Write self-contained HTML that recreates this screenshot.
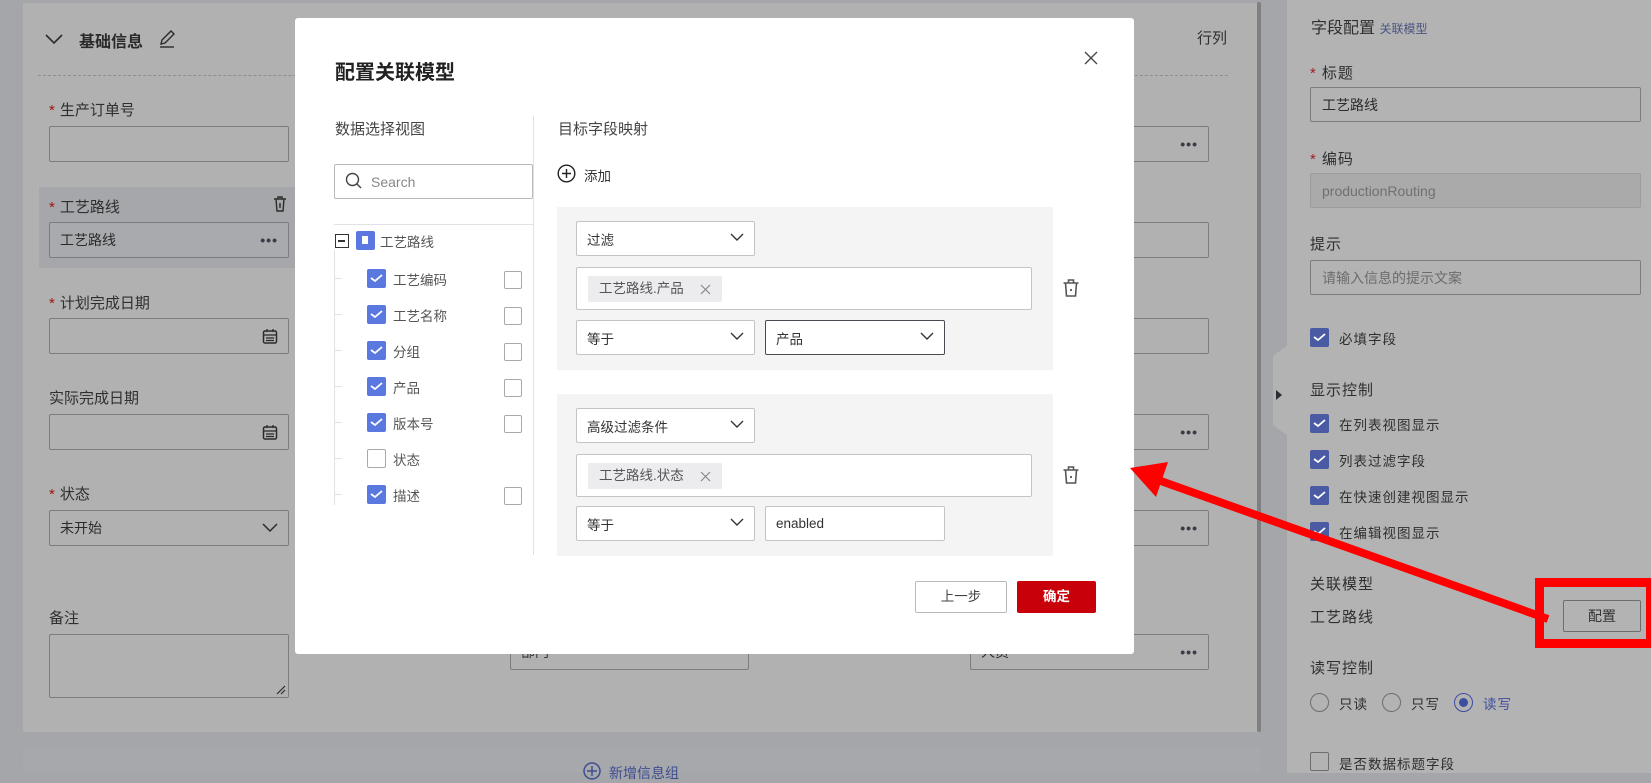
<!DOCTYPE html>
<html><head><meta charset="utf-8"><style>
*{box-sizing:border-box;margin:0;padding:0}
body{width:1651px;height:773px;position:relative;overflow:hidden;background:#a5a6aa;font-family:"Liberation Sans","Noto Sans CJK SC",sans-serif;color:#2b2b2b}
.a{position:absolute}
.card{left:23px;top:3px;width:1237px;height:729px;background:#b1b1b1}
.lbl{position:absolute;font-size:15px;color:#2f2f2f}
.req{color:#a01515;margin-right:5px}
.in{position:absolute;border:1px solid #7d7d80;border-radius:2px;background:#b1b1b1;font-size:14px;padding-left:10px;display:flex;align-items:center;color:#2b2b2b}
.dots{position:absolute;right:10px;top:50%;transform:translateY(-50%);font-size:14px;letter-spacing:1px;font-weight:bold;color:#3a3d48}
.rp{left:1287px;top:0;width:364px;height:773px;background:#b3b3b3}
.rin{position:absolute;left:1310px;width:331px;height:35px;border:1px solid #7d7d80;border-radius:2px;font-size:14px;padding-left:11px;display:flex;align-items:center}
.cb{position:absolute;width:19px;height:19px;background:#4a5ba3;border-radius:2px}
.cb svg{position:absolute;left:3px;top:4px}
.rl{position:absolute;font-size:13.5px;color:#2f2f2f;letter-spacing:1px}
.modal{left:295px;top:18px;width:839px;height:636px;background:#fff;border-radius:3px}
.m{position:absolute}
.box{position:absolute;left:262px;width:496px;background:#f4f4f5}
.sel{position:absolute;height:35px;border:1px solid #c4c4c8;border-radius:2px;background:#fff;font-size:13.5px;padding-left:10px;display:flex;align-items:center;color:#333}
.sel svg{position:absolute;right:10px;top:11px}
.tag{position:absolute;left:11px;top:8px;height:26px;width:134px;background:#ececef;border-radius:2px;font-size:13.5px;color:#555;padding-left:11px;line-height:26px}
.bcb{position:absolute;width:19px;height:19px;background:#5b78e0;border-radius:2px}
.bcb svg{position:absolute;left:3px;top:4px}
.ecb{position:absolute;width:18px;height:18px;border:1px solid #a8a8ae;border-radius:2px;background:#fff}
.tl{position:absolute;font-size:13.5px;color:#555}
</style></head><body>
<div class="a card"></div>
<svg class="a" style="left:44px;top:32px" width="20" height="14"><path d="M2 3 L10 11 L18 3" stroke="#2b2b2b" stroke-width="1.6" fill="none"/></svg>
<div class="a" style="left:79px;top:28px;font-size:16px;font-weight:bold;color:#2a2a2a">基础信息</div>
<svg class="a" style="left:157px;top:29px" width="20" height="20"><path d="M4 15 L5 11 L14 2 L17 5 L8 14 Z" stroke="#2b2b2b" stroke-width="1.4" fill="none"/><path d="M3 18 H17" stroke="#2b2b2b" stroke-width="1.4"/></svg>
<div class="a" style="left:1197px;top:27px;font-size:15px;color:#2f2f2f">行列</div>
<div class="a" style="left:38px;top:75px;width:1190px;border-top:1px dashed #8e8e90"></div>
<div class="lbl" style="left:49px;top:99px"><span class="req">*</span>生产订单号</div>
<div class="in" style="left:49px;top:126px;width:240px;height:36px"></div>
<div class="a" style="left:39px;top:187px;width:261px;height:81px;background:#a6a7ab"></div>
<div class="lbl" style="left:49px;top:196px"><span class="req">*</span>工艺路线</div>
<svg class="a" style="left:272px;top:195px" width="16" height="18"><path d="M2 4 H14 M6 4 V2 H10 V4 M4 4 L5 16 H11 L12 4 M8 8 V13" stroke="#2b2b2b" stroke-width="1.4" fill="none"/></svg>
<div class="in" style="left:49px;top:222px;width:240px;height:36px;background:#a9aaae">工艺路线<span class="dots">•••</span></div>
<div class="lbl" style="left:49px;top:292px"><span class="req">*</span>计划完成日期</div>
<div class="in" style="left:49px;top:318px;width:240px;height:36px"><svg class="a" style="right:10px;top:9px" width="16" height="17"><rect x="1.5" y="3" width="13" height="12" rx="1.5" stroke="#2b2b2b" stroke-width="1.5" fill="none"/><path d="M1.5 7 H14.5 M5 1 V4 M11 1 V4 M4 10 H12 M4 12.5 H12" stroke="#2b2b2b" stroke-width="1.3"/></svg></div>
<div class="lbl" style="left:49px;top:387px">实际完成日期</div>
<div class="in" style="left:49px;top:414px;width:240px;height:36px"><svg class="a" style="right:10px;top:9px" width="16" height="17"><rect x="1.5" y="3" width="13" height="12" rx="1.5" stroke="#2b2b2b" stroke-width="1.5" fill="none"/><path d="M1.5 7 H14.5 M5 1 V4 M11 1 V4 M4 10 H12 M4 12.5 H12" stroke="#2b2b2b" stroke-width="1.3"/></svg></div>
<div class="lbl" style="left:49px;top:483px"><span class="req">*</span>状态</div>
<div class="in" style="left:49px;top:510px;width:240px;height:36px">未开始<svg class="a" style="right:10px;top:12px" width="16" height="10"><path d="M1 1 L8 8 L15 1" stroke="#2b2b2b" stroke-width="1.5" fill="none"/></svg></div>
<div class="lbl" style="left:49px;top:607px">备注</div>
<div class="in" style="left:49px;top:634px;width:240px;height:64px"><svg class="a" style="right:2px;bottom:2px" width="10" height="10"><path d="M1 9 L9 1 M5 9 L9 5" stroke="#2b2b2b" stroke-width="1.2"/></svg></div>
<div class="in" style="left:510px;top:634px;width:239px;height:36px;color:#333">部门</div>
<div class="in" style="left:970px;top:126px;width:239px;height:36px"><span class="dots">•••</span></div>
<div class="in" style="left:970px;top:222px;width:239px;height:36px"></div>
<div class="in" style="left:970px;top:318px;width:239px;height:36px"></div>
<div class="in" style="left:970px;top:414px;width:239px;height:36px"><span class="dots">•••</span></div>
<div class="in" style="left:970px;top:510px;width:239px;height:36px"><span class="dots">•••</span></div>
<div class="in" style="left:970px;top:634px;width:239px;height:36px">人员<span class="dots">•••</span></div>
<div class="a" style="left:1257px;top:2px;width:4px;height:730px;background:#7f7f82;border-radius:2px"></div>
<div class="a" style="left:23px;top:747px;width:1237px;height:26px;background:#a7a8ac"></div>
<svg class="a" style="left:583px;top:762px" width="18" height="18"><circle cx="9" cy="9" r="8" stroke="#3d4d8f" stroke-width="1.5" fill="none"/><path d="M9 4 V14 M4 9 H14" stroke="#3d4d8f" stroke-width="1.5"/></svg>
<div class="a" style="left:609px;top:763px;font-size:14px;color:#3d4d8f">新增信息组</div>
<div class="a rp"></div>
<div class="a" style="left:1273px;top:345px;width:15px;height:91px;background:#b3b3b3;clip-path:polygon(100% 0,100% 100%,0 88%,0 12%)"></div>
<svg class="a" style="left:1275px;top:389px" width="8" height="12"><path d="M1 1 L7 6 L1 11 Z" fill="#2b2b35"/></svg>
<div class="a" style="left:1311px;top:14px;font-size:16px;color:#2f2f2f">字段配置 <span style="font-size:12px;color:#4a5580">关联模型</span></div>
<div class="rl" style="left:1310px;top:62px;font-size:15px"><span class="req" style="color:#a02020">*</span>标题</div>
<div class="rin" style="top:87px">工艺路线</div>
<div class="rl" style="left:1310px;top:148px;font-size:15px"><span class="req" style="color:#a02020">*</span>编码</div>
<div class="rin" style="top:173px;background:#aaaaab;color:#707070;border-color:#9c9c9e">productionRouting</div>
<div class="rl" style="left:1310px;top:233px;font-size:15px">提示</div>
<div class="rin" style="top:260px;color:#6c6c6c">请输入信息的提示文案</div>
<div class="cb" style="left:1310px;top:328px"><svg width="13" height="10"><path d="M1 5 L5 8 L12 2" stroke="#fff" stroke-width="1.8" fill="none"/></svg></div>
<div class="rl" style="left:1339px;top:328px">必填字段</div>
<div class="rl" style="left:1310px;top:379px;font-size:15px">显示控制</div>
<div class="cb" style="left:1310px;top:414px"><svg width="13" height="10"><path d="M1 5 L5 8 L12 2" stroke="#fff" stroke-width="1.8" fill="none"/></svg></div>
<div class="rl" style="left:1339px;top:414px">在列表视图显示</div>
<div class="cb" style="left:1310px;top:450px"><svg width="13" height="10"><path d="M1 5 L5 8 L12 2" stroke="#fff" stroke-width="1.8" fill="none"/></svg></div>
<div class="rl" style="left:1339px;top:450px">列表过滤字段</div>
<div class="cb" style="left:1310px;top:486px"><svg width="13" height="10"><path d="M1 5 L5 8 L12 2" stroke="#fff" stroke-width="1.8" fill="none"/></svg></div>
<div class="rl" style="left:1339px;top:486px">在快速创建视图显示</div>
<div class="cb" style="left:1310px;top:522px"><svg width="13" height="10"><path d="M1 5 L5 8 L12 2" stroke="#fff" stroke-width="1.8" fill="none"/></svg></div>
<div class="rl" style="left:1339px;top:522px">在编辑视图显示</div>
<div class="rl" style="left:1310px;top:573px;font-size:15px">关联模型</div>
<div class="rl" style="left:1310px;top:606px;font-size:15px">工艺路线</div>
<div class="a" style="left:1563px;top:600px;width:78px;height:32px;border:1px solid #6e6e70;border-radius:2px;font-size:14px;text-align:center;line-height:30px;color:#333">配置</div>
<div class="a" style="left:1535px;top:578px;width:120px;height:70px;border:9px solid #ff0000"></div>
<div class="rl" style="left:1310px;top:657px;font-size:15px">读写控制</div>
<div class="a" style="left:1310px;top:693px;width:19px;height:19px;border:1px solid #6e6e70;border-radius:50%"></div>
<div class="rl" style="left:1339px;top:693px">只读</div>
<div class="a" style="left:1382px;top:693px;width:19px;height:19px;border:1px solid #6e6e70;border-radius:50%"></div>
<div class="rl" style="left:1411px;top:693px">只写</div>
<div class="a" style="left:1454px;top:693px;width:19px;height:19px;border:1px solid #3d4d9f;border-radius:50%"><div class="a" style="left:4px;top:4px;width:9px;height:9px;background:#3d4d9f;border-radius:50%"></div></div>
<div class="rl" style="left:1483px;top:693px;color:#3d4d9f">读写</div>
<div class="a" style="left:1310px;top:752px;width:19px;height:19px;border:1px solid #6e6e70;border-radius:2px"></div>
<div class="rl" style="left:1339px;top:753px">是否数据标题字段</div>
<div class="a modal">
  <div class="m" style="left:40px;top:38px;font-size:20px;font-weight:bold;color:#222">配置关联模型</div>
  <svg class="m" style="left:789px;top:33px" width="14" height="14"><path d="M1 1 L13 13 M13 1 L1 13" stroke="#444" stroke-width="1.3"/></svg>
  <div class="m" style="left:40px;top:100px;font-size:15px;color:#444">数据选择视图</div>
  <div class="m" style="left:238px;top:98px;width:1px;height:439px;background:#e2e2e6"></div>
  <div class="m" style="left:263px;top:100px;font-size:15px;color:#444">目标字段映射</div>
  <div class="m" style="left:39px;top:146px;width:199px;height:35px;border:1px solid #b8b8be;border-radius:2px"></div>
  <svg class="m" style="left:50px;top:154px" width="18" height="18"><circle cx="7.5" cy="7.5" r="6" stroke="#444" stroke-width="1.4" fill="none"/><path d="M12 12 L16 16" stroke="#444" stroke-width="1.4"/></svg>
  <div class="m" style="left:76px;top:156px;font-size:14px;color:#888">Search</div>
  <div class="m" style="left:39px;top:206px;width:199px;height:1px;background:#e2e2e6"></div>
  <div class="m" style="left:40px;top:216px;width:14px;height:14px;border:1.5px solid #333;background:#fff"><div class="m" style="left:2px;top:5px;width:7px;height:1.5px;background:#333"></div></div>
  <div class="m" style="left:61px;top:213px;width:19px;height:19px;background:#5b78e0;border-radius:2px"><div class="m" style="left:6px;top:5px;width:6px;height:8px;background:#fff"></div></div>
  <div class="tl" style="left:85px;top:213px">工艺路线</div>
  <div class="m" style="left:39px;top:232px;width:1px;height:255px;background:#e2e2e6"></div>
  <div class="m" style="left:39px;top:260px;width:8px;height:1px;background:#e2e2e6"></div>
  <div class="bcb" style="left:72px;top:251px"><svg width="13" height="10"><path d="M1 5 L5 8 L12 2" stroke="#fff" stroke-width="1.8" fill="none"/></svg></div>
  <div class="tl" style="left:98px;top:251px">工艺编码</div><div class="ecb" style="left:209px;top:253px"></div>
  <div class="m" style="left:39px;top:296px;width:8px;height:1px;background:#e2e2e6"></div>
  <div class="bcb" style="left:72px;top:287px"><svg width="13" height="10"><path d="M1 5 L5 8 L12 2" stroke="#fff" stroke-width="1.8" fill="none"/></svg></div>
  <div class="tl" style="left:98px;top:287px">工艺名称</div><div class="ecb" style="left:209px;top:289px"></div>
  <div class="m" style="left:39px;top:332px;width:8px;height:1px;background:#e2e2e6"></div>
  <div class="bcb" style="left:72px;top:323px"><svg width="13" height="10"><path d="M1 5 L5 8 L12 2" stroke="#fff" stroke-width="1.8" fill="none"/></svg></div>
  <div class="tl" style="left:98px;top:323px">分组</div><div class="ecb" style="left:209px;top:325px"></div>
  <div class="m" style="left:39px;top:368px;width:8px;height:1px;background:#e2e2e6"></div>
  <div class="bcb" style="left:72px;top:359px"><svg width="13" height="10"><path d="M1 5 L5 8 L12 2" stroke="#fff" stroke-width="1.8" fill="none"/></svg></div>
  <div class="tl" style="left:98px;top:359px">产品</div><div class="ecb" style="left:209px;top:361px"></div>
  <div class="m" style="left:39px;top:404px;width:8px;height:1px;background:#e2e2e6"></div>
  <div class="bcb" style="left:72px;top:395px"><svg width="13" height="10"><path d="M1 5 L5 8 L12 2" stroke="#fff" stroke-width="1.8" fill="none"/></svg></div>
  <div class="tl" style="left:98px;top:395px">版本号</div><div class="ecb" style="left:209px;top:397px"></div>
  <div class="m" style="left:39px;top:440px;width:8px;height:1px;background:#e2e2e6"></div>
  <div class="ecb" style="left:72px;top:431px;width:19px;height:19px"></div>
  <div class="tl" style="left:98px;top:431px">状态</div>
  <div class="m" style="left:39px;top:476px;width:8px;height:1px;background:#e2e2e6"></div>
  <div class="bcb" style="left:72px;top:467px"><svg width="13" height="10"><path d="M1 5 L5 8 L12 2" stroke="#fff" stroke-width="1.8" fill="none"/></svg></div>
  <div class="tl" style="left:98px;top:467px">描述</div><div class="ecb" style="left:209px;top:469px"></div>
  <svg class="m" style="left:262px;top:146px" width="19" height="19"><circle cx="9.5" cy="9.5" r="8.3" stroke="#222" stroke-width="1.4" fill="none"/><path d="M9.5 5 V14 M5 9.5 H14" stroke="#222" stroke-width="1.4"/></svg>
  <div class="m" style="left:289px;top:147px;font-size:13.5px;color:#333">添加</div>
  <div class="box" style="top:189px;height:163px">
    <div class="sel" style="left:19px;top:14px;width:179px">过滤<svg width="14" height="9"><path d="M1 1 L7 7 L13 1" stroke="#333" stroke-width="1.4" fill="none"/></svg></div>
    <div class="sel" style="left:19px;top:60px;width:456px;height:43px"><div class="tag">工艺路线.产品<svg style="position:absolute;right:11px;top:8px" width="11" height="11"><path d="M1 1 L10 10 M10 1 L1 10" stroke="#888" stroke-width="1.2"/></svg></div></div>
    <div class="sel" style="left:19px;top:113px;width:179px">等于<svg width="14" height="9"><path d="M1 1 L7 7 L13 1" stroke="#333" stroke-width="1.4" fill="none"/></svg></div>
    <div class="sel" style="left:208px;top:113px;width:180px;border-color:#4a4a52">产品<svg width="14" height="9"><path d="M1 1 L7 7 L13 1" stroke="#333" stroke-width="1.4" fill="none"/></svg></div>
  </div>
  <svg class="m" style="left:767px;top:260px" width="18" height="20"><path d="M1.5 5 H16.5 M6.5 5 V2 H11.5 V5 M3.5 5 L4.5 18 H13.5 L14.5 5" stroke="#555" stroke-width="1.6" fill="none"/><circle cx="9" cy="12" r="1.1" fill="#555"/></svg>
  <div class="box" style="top:376px;height:162px">
    <div class="sel" style="left:19px;top:14px;width:179px">高级过滤条件<svg width="14" height="9"><path d="M1 1 L7 7 L13 1" stroke="#333" stroke-width="1.4" fill="none"/></svg></div>
    <div class="sel" style="left:19px;top:60px;width:456px;height:43px"><div class="tag">工艺路线.状态<svg style="position:absolute;right:11px;top:8px" width="11" height="11"><path d="M1 1 L10 10 M10 1 L1 10" stroke="#888" stroke-width="1.2"/></svg></div></div>
    <div class="sel" style="left:19px;top:112px;width:179px">等于<svg width="14" height="9"><path d="M1 1 L7 7 L13 1" stroke="#333" stroke-width="1.4" fill="none"/></svg></div>
    <div class="sel" style="left:208px;top:112px;width:180px">enabled</div>
  </div>
  <svg class="m" style="left:767px;top:447px" width="18" height="20"><path d="M1.5 5 H16.5 M6.5 5 V2 H11.5 V5 M3.5 5 L4.5 18 H13.5 L14.5 5" stroke="#555" stroke-width="1.6" fill="none"/><circle cx="9" cy="12" r="1.1" fill="#555"/></svg>
  <div class="m" style="left:620px;top:563px;width:92px;height:32px;border:1px solid #b8b8be;border-radius:2px;font-size:13.5px;text-align:center;line-height:30px;color:#444">上一步</div>
  <div class="m" style="left:722px;top:563px;width:79px;height:32px;background:#c8000a;border-radius:2px;font-size:13.5px;font-weight:bold;text-align:center;line-height:32px;color:#fff">确定</div>
</div>
<svg class="a" style="left:0;top:0" width="1651" height="773"><path d="M1548 619 L1158 480" stroke="#ff0000" stroke-width="8" fill="none"/><path d="M1130 468 L1168 462 L1156 497 Z" fill="#ff0000"/></svg>
</body></html>
